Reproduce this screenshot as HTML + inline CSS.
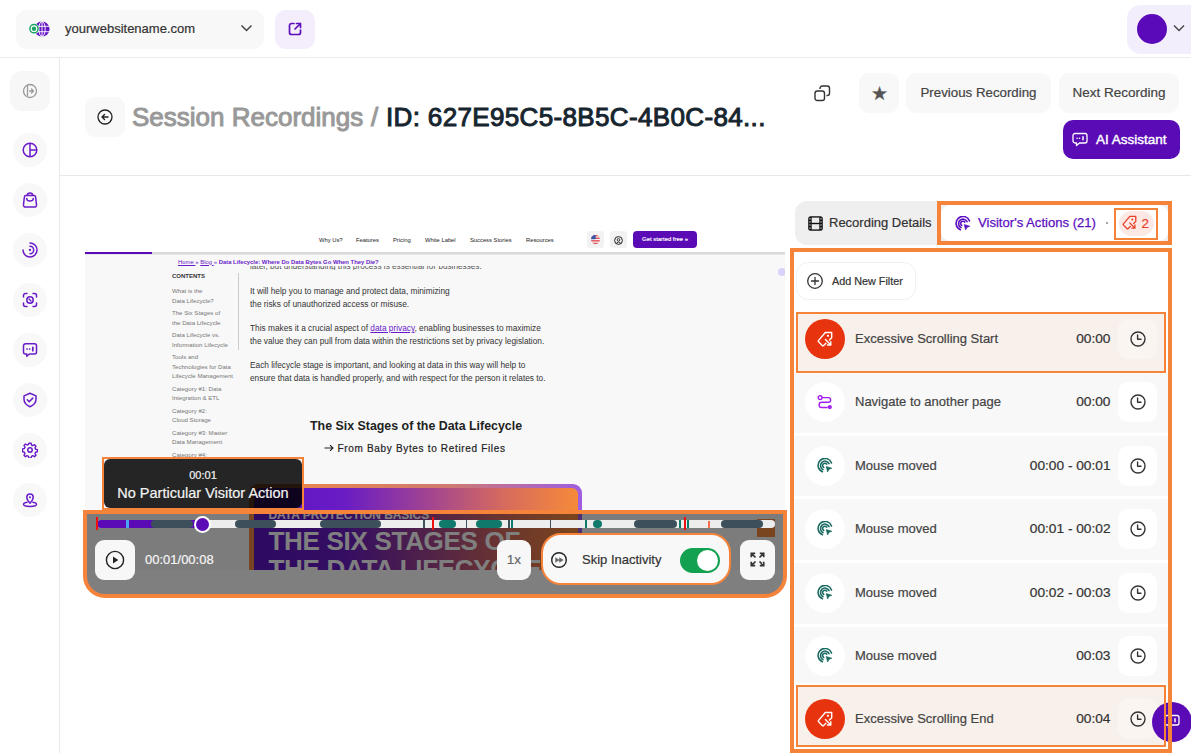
<!DOCTYPE html>
<html><head><meta charset="utf-8">
<style>
*{box-sizing:border-box;margin:0;padding:0}
html,body{width:1191px;height:753px;overflow:hidden;background:#fff;font-family:"Liberation Sans",sans-serif;color:#333}
.a{position:absolute}
svg{display:block}
#emb .t{-webkit-text-stroke:0}
.btn{position:absolute;background:#f8f8f8;border-radius:10px}
.t{position:absolute;white-space:nowrap;line-height:1;-webkit-text-stroke:.2px currentColor}
</style></head><body>
<!-- top header -->
<div class="a" style="left:16px;top:10px;width:248px;height:39px;background:#f8f8f8;border-radius:11px"></div>
<svg class="a" style="left:26px;top:19px" width="26" height="20" viewBox="0 0 26 20">
  <circle cx="16" cy="10" r="7.6" fill="#6414c4"/>
  <g stroke="#fff" stroke-width=".9" fill="none"><ellipse cx="16" cy="10" rx="3.2" ry="7.4"/><path d="M16 2.5v15M8.6 7.3h14.8M8.6 12.7h14.8"/></g>
  <circle cx="8" cy="9.7" r="5.3" fill="#fff"/>
  <circle cx="8" cy="9.7" r="4.1" fill="#fff" stroke="#19a463" stroke-width="1.5"/>
  <circle cx="8" cy="9.7" r="2.2" fill="#19a463"/>
</svg>
<div class="t" style="left:65px;top:22px;font-size:13px;color:#333">yourwebsitename.com</div>
<svg class="a" style="left:240px;top:24px" width="13" height="9" viewBox="0 0 13 9"><path d="M1.5 1.5l5 5 5-5" stroke="#444" stroke-width="1.5" fill="none"/></svg>
<div class="a" style="left:275px;top:10px;width:40px;height:39px;background:#f3edfc;border-radius:11px"></div>
<svg class="a" style="left:287px;top:21px" width="16" height="16" viewBox="0 0 16 16"><path d="M7 2.5H4.5a2 2 0 0 0-2 2v7a2 2 0 0 0 2 2h7a2 2 0 0 0 2-2V9M9.5 2.5h4v4M13.5 2.5L8 8" stroke="#5d0fb9" stroke-width="1.7" fill="none" stroke-linecap="round" stroke-linejoin="round"/></svg>
<div class="a" style="left:1127px;top:4.5px;width:80px;height:49px;background:#f3eefc;border-radius:14px"></div>
<div class="a" style="left:1137px;top:14px;width:30px;height:30px;background:#5a0ab8;border-radius:50%"></div>
<svg class="a" style="left:1173px;top:24px" width="12" height="8" viewBox="0 0 12 8"><path d="M1 1.5l5 5 5-5" stroke="#444" stroke-width="1.4" fill="none"/></svg>
<div class="a" style="left:0;top:57px;width:1191px;height:1px;background:#ebebeb"></div>

<!-- sidebar -->
<div class="a" style="left:59px;top:58px;width:1px;height:695px;background:#e9e9e9"></div>
<div class="a" style="left:10px;top:71px;width:40px;height:40px;background:#f7f7f7;border-radius:12px"></div>
<svg class="a" style="left:22px;top:83px" width="16" height="16" viewBox="0 0 16 16"><circle cx="8" cy="8" r="6.5" stroke="#9a9a9a" stroke-width="1.3" fill="none"/><path d="M5.5 3.5v9M7.5 8h4M9.5 6l2 2-2 2" stroke="#9a9a9a" stroke-width="1.3" fill="none" stroke-linecap="round" stroke-linejoin="round"/></svg>
<div class="a" style="left:13px;top:133px;width:34px;height:34px;background:#f8f8f8;border-radius:50%"></div>
<svg class="a" style="left:22px;top:142px" width="16" height="16" viewBox="0 0 16 16"><circle cx="8" cy="8" r="6.8" stroke="#6a1bc9" stroke-width="1.5" fill="none"/><path d="M8 1.2v13.6M8 8h6.8" stroke="#6a1bc9" stroke-width="1.5"/></svg>
<div class="a" style="left:13px;top:183px;width:34px;height:34px;background:#f8f8f8;border-radius:50%"></div>
<svg class="a" style="left:22px;top:192px" width="16" height="16" viewBox="0 0 16 16"><path d="M4 3.6H12Q13.4 3.6 13.6 5L14.5 12.6Q14.7 15 12.3 15H3.7Q1.3 15 1.5 12.6L2.4 5Q2.6 3.6 4 3.6ZM5.1 3.6Q5.4 1 8 1Q10.6 1 10.9 3.6" stroke="#6a1bc9" stroke-width="1.5" fill="none" stroke-linejoin="round"/><path d="M4.7 6.5Q4.9 9.1 8 9.1Q11.1 9.1 11.3 6.5" stroke="#6a1bc9" stroke-width="1.5" fill="none" stroke-linecap="round"/></svg>
<div class="a" style="left:13px;top:233px;width:34px;height:34px;background:#f8f8f8;border-radius:50%"></div>
<svg class="a" style="left:22px;top:242px" width="16" height="16" viewBox="0 0 16 16"><path d="M8 1A7 7 0 1 1 1 8M8 4.3A3.7 3.7 0 0 1 8 11.7" stroke="#6a1bc9" stroke-width="1.5" fill="none" stroke-linecap="round"/><circle cx="8" cy="8" r="1.15" fill="#6a1bc9"/></svg>
<div class="a" style="left:13px;top:283px;width:34px;height:34px;background:#f8f8f8;border-radius:50%"></div>
<svg class="a" style="left:22px;top:292px" width="16" height="16" viewBox="0 0 16 16"><path d="M1.5 5V3.5a2 2 0 0 1 2-2H5M11 1.5h1.5a2 2 0 0 1 2 2V5M14.5 11v1.5a2 2 0 0 1-2 2H11M5 14.5H3.5a2 2 0 0 1-2-2V11" stroke="#6a1bc9" stroke-width="1.5" fill="none" stroke-linecap="round"/><circle cx="8" cy="8" r="3.2" stroke="#6a1bc9" stroke-width="1.5" fill="none"/><path d="M7 7l2 2" stroke="#6a1bc9" stroke-width="1.3" stroke-linecap="round"/></svg>
<div class="a" style="left:13px;top:333px;width:34px;height:34px;background:#f8f8f8;border-radius:50%"></div>
<svg class="a" style="left:22px;top:342px" width="16" height="16" viewBox="0 0 16 16"><path d="M3.5 1.8h9a2 2 0 0 1 2 2v6.2a2 2 0 0 1-2 2H7.5l-2.7 2.3v-2.3H3.5a2 2 0 0 1-2-2V3.8a2 2 0 0 1 2-2z" stroke="#6a1bc9" stroke-width="1.5" fill="none" stroke-linejoin="round"/><path d="M5 7h.1M7.6 7h.1M10.8 5.3v3.4" stroke="#6a1bc9" stroke-width="1.7" stroke-linecap="round"/></svg>
<div class="a" style="left:13px;top:383px;width:34px;height:34px;background:#f8f8f8;border-radius:50%"></div>
<svg class="a" style="left:22px;top:392px" width="16" height="16" viewBox="0 0 16 16"><path d="M8 1.3l6 2.6v3.4c0 3.3-2.6 6-6 7.4-3.4-1.4-6-4.1-6-7.4V3.9z" stroke="#6a1bc9" stroke-width="1.5" fill="none" stroke-linejoin="round"/><path d="M5.3 7.8l1.9 1.9 3.6-3.6" stroke="#6a1bc9" stroke-width="1.5" fill="none" stroke-linecap="round" stroke-linejoin="round"/></svg>
<div class="a" style="left:13px;top:433px;width:34px;height:34px;background:#f8f8f8;border-radius:50%"></div>
<svg class="a" style="left:22px;top:442px" width="16" height="16" viewBox="0 0 16 16"><path d="M6.9 1.2h2.2l.4 1.9 1.3.6 1.7-1 1.5 1.5-1 1.7.6 1.3 1.9.4v2.2l-1.9.4-.6 1.3 1 1.7-1.5 1.5-1.7-1-1.3.6-.4 1.9H6.9l-.4-1.9-1.3-.6-1.7 1-1.5-1.5 1-1.7-.6-1.3-1.9-.4V6.9l1.9-.4.6-1.3-1-1.7 1.5-1.5 1.7 1 1.3-.6z" stroke="#6a1bc9" stroke-width="1.4" fill="none" stroke-linejoin="round"/><circle cx="8" cy="8" r="2.2" stroke="#6a1bc9" stroke-width="1.5" fill="none"/></svg>
<div class="a" style="left:13px;top:483px;width:34px;height:34px;background:#f8f8f8;border-radius:50%"></div>
<svg class="a" style="left:22px;top:492px" width="16" height="16" viewBox="0 0 16 16"><path d="M8 11.2C6 9 4.8 7.2 4.8 5.3a3.2 3.2 0 0 1 6.4 0c0 1.9-1.2 3.7-3.2 5.9z" stroke="#6a1bc9" stroke-width="1.5" fill="none" stroke-linejoin="round"/><circle cx="8" cy="5.3" r="1" fill="#6a1bc9"/><path d="M5.2 10.2C3 10.6 1.5 11.4 1.5 12.3c0 1.2 2.9 2.2 6.5 2.2s6.5-1 6.5-2.2c0-.9-1.5-1.7-3.7-2.1" stroke="#6a1bc9" stroke-width="1.5" fill="none" stroke-linecap="round"/></svg>

<!-- page header -->
<div class="a" style="left:60px;top:175px;width:1131px;height:1px;background:#e8e8e8"></div>
<div class="btn" style="left:85px;top:97px;width:40px;height:40px"></div>
<svg class="a" style="left:97px;top:109px" width="16" height="16" viewBox="0 0 16 16"><circle cx="8" cy="8" r="7" stroke="#222" stroke-width="1.3" fill="none"/><path d="M11 8H5.3M7.5 5.5L5 8l2.5 2.5" stroke="#222" stroke-width="1.4" fill="none" stroke-linecap="round" stroke-linejoin="round"/></svg>
<div class="t" style="left:132px;top:104px;font-size:26px;color:#999;-webkit-text-stroke:1px #999">Session Recordings <span style="position:absolute;left:239px">/</span></div>
<div class="t" style="left:386px;top:104px;font-size:26px;color:#17252f;-webkit-text-stroke:1px #17252f;letter-spacing:.35px">ID: 627E95C5-8B5C-4B0C-84...</div>
<svg class="a" style="left:814px;top:85px" width="17" height="17" viewBox="0 0 17 17"><rect x="1" y="6" width="9.5" height="9.5" rx="2.3" stroke="#333" stroke-width="1.4" fill="none"/><path d="M6 4V3.3A2.3 2.3 0 0 1 8.3 1h4.9a2.3 2.3 0 0 1 2.3 2.3v4.9a2.3 2.3 0 0 1-2.3 2.3h-.7" stroke="#333" stroke-width="1.4" fill="none"/></svg>
<div class="btn" style="left:859px;top:73px;width:40px;height:40px"></div>
<div class="t" style="left:859px;top:84px;width:40px;text-align:center;font-size:19px;color:#555">&#9733;</div>
<div class="btn" style="left:906px;top:73px;width:145px;height:40px"></div>
<div class="t" style="left:906px;top:86px;width:145px;text-align:center;font-size:13.3px;color:#444">Previous Recording</div>
<div class="btn" style="left:1059px;top:73px;width:120px;height:40px"></div>
<div class="t" style="left:1059px;top:86px;width:120px;text-align:center;font-size:13.5px;color:#444">Next Recording</div>
<div class="a" style="left:1063px;top:120px;width:117px;height:39px;background:#5b0bb5;border-radius:10px"></div>
<svg class="a" style="left:1072px;top:132px" width="16" height="15" viewBox="0 0 16 15"><path d="M3 1.5h10a2 2 0 0 1 2 2v5.5a2 2 0 0 1-2 2H7.5L4.5 13.5v-2.5H3a2 2 0 0 1-2-2V3.5a2 2 0 0 1 2-2z" stroke="#fff" stroke-width="1.3" fill="none" stroke-linejoin="round"/><path d="M5 6.3h.1M7.5 6.3h.1M11 4.8v3" stroke="#fff" stroke-width="1.5" stroke-linecap="round"/></svg>
<div class="t" style="left:1096px;top:133px;font-size:13.5px;color:#fff;-webkit-text-stroke:.4px #fff">AI Assistant</div>


<!-- embedded page -->
<div class="a" id="emb" style="left:85px;top:200px;width:700px;height:370px;overflow:hidden;background:#fff">
 <div class="a" style="left:0;top:54px;width:700px;height:341px;background:#f8f8f8"></div>
 <div class="a" style="left:0;top:52px;width:700px;height:2px;background:#d9d9d9;box-shadow:0 1px 1px rgba(0,0,0,.08)"></div>
 <div class="a" style="left:0;top:52px;width:67px;height:2px;background:#5b0bb5"></div>
 <div class="t" style="left:234px;top:37.5px;font-size:5.8px;color:#222">Why Us?</div>
 <div class="t" style="left:271px;top:37.5px;font-size:5.8px;color:#222">Features</div>
 <div class="t" style="left:308px;top:37.5px;font-size:5.8px;color:#222">Pricing</div>
 <div class="t" style="left:340px;top:37.5px;font-size:5.8px;color:#222">White Label</div>
 <div class="t" style="left:385px;top:37.5px;font-size:5.8px;color:#222">Success Stories</div>
 <div class="t" style="left:441px;top:37.5px;font-size:5.8px;color:#222">Resources</div>
 <div class="a" style="left:502px;top:31px;width:17px;height:17px;background:#f2f2f2;border-radius:3px"></div>
 <svg class="a" style="left:506px;top:35px" width="9" height="9" viewBox="0 0 9 9"><defs><clipPath id="fc"><circle cx="4.5" cy="4.5" r="4.5"/></clipPath></defs><g clip-path="url(#fc)"><rect width="9" height="9" fill="#f4f4f4"/><rect y="0" width="9" height="1.3" fill="#e0404a"/><rect y="2.6" width="9" height="1.3" fill="#e0404a"/><rect y="5.2" width="9" height="1.3" fill="#e0404a"/><rect y="7.8" width="9" height="1.3" fill="#e0404a"/><rect width="4.6" height="4.2" fill="#3553a8"/></g></svg>
 <div class="a" style="left:525px;top:31px;width:17px;height:17px;background:#f2f2f2;border-radius:3px"></div>
 <svg class="a" style="left:529px;top:35.5px" width="9" height="9" viewBox="0 0 9 9"><circle cx="4.5" cy="4.5" r="3.9" stroke="#222" stroke-width="1" fill="none"/><circle cx="4.5" cy="3.9" r="1.3" stroke="#222" stroke-width=".9" fill="none"/><path d="M2.3 7.2q2.2-2.2 4.4 0" stroke="#222" stroke-width=".9" fill="none"/></svg>
 <div class="a" style="left:548px;top:31px;width:64px;height:17px;background:#5b0bb5;border-radius:4px"></div>
 <div class="t" style="left:548px;top:36.5px;width:64px;text-align:center;font-size:5.9px;color:#fff;-webkit-text-stroke:.15px #fff">Get started free &raquo;</div>
 <div class="a" style="left:0;top:55px;width:700px;height:15px;background:#f8f8f8"></div>
 <div class="t" style="left:93px;top:59.5px;font-size:5.9px;color:#6a1bc9"><u>Home </u> &raquo; <u>Blog </u> &raquo; <b>Data Lifecycle: Where Do Data Bytes Go When They Die?</b></div>
 <div class="a" style="left:165px;top:66px;width:233px;height:4px;overflow:hidden"><div class="t" style="left:0;top:-3.5px;font-size:8.2px;color:#555">later, but understanding this process is essential for businesses.</div></div>
 <div class="t" style="left:87px;top:73px;font-size:6px;font-weight:bold;color:#333">CONTENTS</div>
 <div class="a" style="left:153px;top:73px;width:1px;height:77px;background:#ccc"></div>
 <div class="a" style="left:87px;top:86px;font-size:6.1px;line-height:9.5px;color:#777">
  <div style="margin-bottom:3px">What is the<br>Data Lifecycle?</div>
  <div style="margin-bottom:3px">The Six Stages of<br>the Data Lifecycle</div>
  <div style="margin-bottom:3px">Data Lifecycle vs.<br>Information Lifecycle</div>
  <div style="margin-bottom:3px">Tools and<br>Technologies for Data<br>Lifecycle Management</div>
  <div style="margin-bottom:3px">Category #1: Data<br>Integration &amp; ETL</div>
  <div style="margin-bottom:3px">Category #2:<br>Cloud Storage</div>
  <div style="margin-bottom:3px">Category #3: Master<br>Data Management</div>
  <div style="margin-bottom:3px">Category #4:</div>
 </div>
 <div class="a" style="left:165px;top:85px;font-size:8.3px;line-height:13px;color:#333;white-space:nowrap">
  <div style="margin-bottom:11px">It will help you to manage and protect data, minimizing<br>the risks of unauthorized access or misuse.</div>
  <div style="margin-bottom:11px">This makes it a crucial aspect of <u style="color:#6a1bc9">data privacy</u>, enabling businesses to maximize<br>the value they can pull from data within the restrictions set by privacy legislation.</div>
  <div>Each lifecycle stage is important, and looking at data in this way will help to<br>ensure that data is handled properly, and with respect for the person it relates to.</div>
 </div>
 <div class="t" style="left:225px;top:220px;font-size:12.4px;font-weight:bold;color:#222">The Six Stages of the Data Lifecycle</div>
 <svg class="a" style="left:239px;top:244px" width="10" height="8" viewBox="0 0 10 8"><path d="M.5 4H9M6 1.2L9 4 6 6.8" stroke="#222" stroke-width="1.1" fill="none"/></svg>
 <div class="t" style="left:252.5px;top:244px;font-size:10px;color:#222;letter-spacing:.67px;-webkit-text-stroke:.2px #222">From Baby Bytes to Retired Files</div>
 <div class="a" style="left:693px;top:68px;width:8px;height:8px;border-radius:50%;background:#d9d2fb"></div>
 <!-- image card -->
 <div class="a" style="left:164px;top:283.5px;width:333px;height:120px;border-radius:9px;background:linear-gradient(90deg,#ee8a45 0%,#d07a70 60%,#9d5ee2 100%)"></div>
 <div class="a" style="left:168.5px;top:288px;width:324px;height:120px;border-radius:6px 6px 0 0;background:linear-gradient(90deg,#5c14c6 0%,#6a1cc4 28%,#a4468f 55%,#d86c5c 78%,#f58a3a 100%)"></div>
 <div class="t" style="left:183.5px;top:309px;font-size:12px;font-weight:bold;color:#fff;letter-spacing:-.05px">DATA PROTECTION BASICS</div>
 <div class="t" style="left:183.5px;top:327px;font-size:26px;font-weight:bold;color:#fff;line-height:28px;letter-spacing:-.3px">THE SIX STAGES OF<br>THE DATA LIFECYCLE</div>
 <div class="a" style="left:672px;top:319px;width:18px;height:18px;background:#f28a3c"></div>
</div>


<!-- player controls -->
<div class="a" style="left:83px;top:510px;width:704px;height:88px;border:4px solid #f5843a;border-radius:0 0 22px 22px;background:rgba(0,0,0,.5)"></div>
<div id="bar" class="a" style="left:97px;top:520px;width:678px;height:8px;background:#ededed;border-radius:4px"></div>
<div class="a" style="left:97px;top:520px;width:100px;height:8px;background:#5b0bb5;border-radius:4px 0 0 4px"></div>
<div class="a" style="left:126px;top:520px;width:2.5px;height:8px;background:#4aa3f0"></div>
<div class="a" style="left:151px;top:520px;width:42px;height:8px;background:#3d4f5b;border-radius:4px"></div>
<div class="a" style="left:235px;top:520px;width:41px;height:8px;background:#3d4f5b;border-radius:4px"></div>
<div class="a" style="left:320px;top:520px;width:61px;height:8px;background:#3d4f5b;border-radius:4px"></div>
<div class="a" style="left:422.5px;top:520px;width:2px;height:8px;background:#3d4f5b"></div>
<div class="a" style="left:439px;top:520px;width:17px;height:8px;background:#0f7a6c;border-radius:4px"></div>
<div class="a" style="left:465.5px;top:520px;width:1.5px;height:8px;background:#3d4f5b"></div>
<div class="a" style="left:476px;top:520px;width:26px;height:8px;background:#0f7a6c;border-radius:4px"></div>
<div class="a" style="left:508px;top:520px;width:1.5px;height:8px;background:#3d4f5b"></div>
<div class="a" style="left:511px;top:520px;width:2px;height:8px;background:#0f7a6c"></div>
<div class="a" style="left:549.5px;top:520px;width:1.5px;height:8px;background:#3d4f5b"></div>
<div class="a" style="left:585px;top:520px;width:1.5px;height:8px;background:#0f7a6c"></div>
<div class="a" style="left:592.5px;top:520px;width:9px;height:8px;background:#0f7a6c;border-radius:4px"></div>
<div class="a" style="left:634px;top:520px;width:43px;height:8px;background:#3d4f5b;border-radius:4px"></div>
<div class="a" style="left:678.5px;top:520px;width:2px;height:8px;background:#0f7a6c"></div>
<div class="a" style="left:687px;top:520px;width:2px;height:8px;background:#0f7a6c"></div>
<div class="a" style="left:707.5px;top:520.5px;width:2px;height:7px;background:#ff6b4a"></div>
<div class="a" style="left:721px;top:520px;width:42px;height:8px;background:#3d4f5b;border-radius:4px"></div>
<div class="a" style="left:95.5px;top:517px;width:2px;height:13px;background:#f01010"></div>
<div class="a" style="left:431.5px;top:517px;width:2.2px;height:13px;background:#f01010"></div>
<div class="a" style="left:684px;top:517px;width:2.2px;height:13px;background:#f01010"></div>
<div class="a" style="left:193.5px;top:515.5px;width:17px;height:17px;background:#5b0bb5;border:2px solid #fff;border-radius:50%"></div>
<div class="a" style="left:95px;top:540px;width:40px;height:40px;background:#f7f7f7;border-radius:9px"></div>
<svg class="a" style="left:105px;top:550px" width="20" height="20" viewBox="0 0 20 20"><circle cx="10" cy="10" r="8.6" stroke="#222" stroke-width="1.4" fill="none"/><path d="M8 6.5v7l5.3-3.5z" fill="#222"/></svg>
<div class="t" style="left:145px;top:553px;font-size:13px;color:#f5f5f5">00:01/00:08</div>
<div class="a" style="left:497px;top:540px;width:34px;height:40px;background:#f7f7f7;border-radius:9px"></div>
<div class="t" style="left:497px;top:553px;width:34px;text-align:center;font-size:13.5px;color:#666">1x</div>
<div class="a" style="left:541px;top:533px;width:190px;height:52px;background:#f8f8f8;border:2.5px solid #f5843a;border-radius:20px"></div>
<svg class="a" style="left:550px;top:551px" width="18" height="18" viewBox="0 0 18 18"><circle cx="9" cy="9" r="7.3" stroke="#222" stroke-width="1.4" fill="none"/><path d="M5.3 6.3v5.4L9.6 9zM9.2 6.3v5.4L13.7 9z" fill="#666"/></svg>
<div class="t" style="left:582px;top:553px;font-size:13px;color:#333">Skip Inactivity</div>
<div class="a" style="left:680px;top:547.5px;width:40px;height:25px;background:#12a150;border-radius:13px"></div>
<div class="a" style="left:696.5px;top:549.5px;width:21px;height:21px;background:#fff;border-radius:50%"></div>
<div class="a" style="left:740px;top:540px;width:35px;height:40px;background:#f7f7f7;border-radius:9px"></div>
<svg class="a" style="left:750px;top:552px" width="15" height="15" viewBox="0 0 15 15"><g stroke="#333" stroke-width="1.7" fill="none" stroke-linejoin="miter"><path d="M1.3 5.2V1.3H5.2M1.3 1.3l4.2 4.2M9.8 1.3h3.9v3.9M13.7 1.3L9.5 5.5M13.7 9.8v3.9H9.8M13.7 13.7L9.5 9.5M5.2 13.7H1.3V9.8M1.3 13.7l4.2-4.2"/></g></svg>
<!-- tooltip -->
<div class="a" style="left:102px;top:457px;width:202px;height:53px;border:2px solid #f5843a"></div>
<div class="a" style="left:104px;top:459px;width:198px;height:49px;background:rgba(0,0,0,.85);border-radius:6px"></div>
<div class="t" style="left:104px;top:470px;width:198px;text-align:center;font-size:11px;color:#f3f3f3">00:01</div>
<div class="t" style="left:104px;top:486px;width:198px;text-align:center;font-size:14.5px;color:#f3f3f3">No Particular Visitor Action</div>


<!-- right panel -->
<div class="a" style="left:795px;top:201px;width:376px;height:44px;background:#efefef;border-radius:12px"></div>
<svg class="a" style="left:807px;top:215px" width="17" height="17" viewBox="0 0 17 17"><rect x="1.2" y="1.2" width="14.6" height="14.6" rx="2.5" fill="#111"/><rect x="4.7" y="2.6" width="7.6" height="5.2" fill="#ececec"/><rect x="4.7" y="9.2" width="7.6" height="5.2" fill="#ececec"/><g fill="#ececec"><rect x="2.4" y="3.2" width="1.2" height="1.2"/><rect x="2.4" y="6.3" width="1.2" height="1.2"/><rect x="2.4" y="9.4" width="1.2" height="1.2"/><rect x="2.4" y="12.5" width="1.2" height="1.2"/><rect x="13.4" y="3.2" width="1.2" height="1.2"/><rect x="13.4" y="6.3" width="1.2" height="1.2"/><rect x="13.4" y="9.4" width="1.2" height="1.2"/><rect x="13.4" y="12.5" width="1.2" height="1.2"/></g></svg>
<div class="t" style="left:829px;top:216px;font-size:13px;color:#333">Recording Details</div>
<div class="a" style="left:941px;top:205px;width:227px;height:36px;background:#fff;border-radius:9px"></div>
<div class="a" style="left:937px;top:201px;width:235px;height:44px;border:4px solid #f5843a"></div>
<svg class="a" style="left:955px;top:215.5px" width="16" height="16" viewBox="0 0 16 16"><path d="M5.4 13.7A6.9 6.9 0 1 1 14.5 5M6 11.6A4.5 4.5 0 1 1 12.1 5.6M6.7 9.5A2.3 2.3 0 1 1 9.7 6.1" stroke="#5b10c0" stroke-width="1.6" fill="none" stroke-linecap="round"/><path d="M9.2 8.5L14.9 10.2L12.1 11.3L10.6 14Z" fill="#5b10c0" stroke="#5b10c0" stroke-width=".6" stroke-linejoin="round"/></svg>
<div class="t" style="left:978px;top:216px;font-size:13.1px;color:#5b10c0;-webkit-text-stroke:.25px #5b10c0">Visitor's Actions (21)</div>
<div class="a" style="left:1106px;top:222px;width:2px;height:2px;background:#888;border-radius:50%"></div>
<div class="a" style="left:1119px;top:211px;width:35px;height:25px;background:#fce8e4;border-radius:12.5px"></div>
<svg class="a" style="left:1122px;top:215px" width="15" height="15" viewBox="0 0 16 16"><path d="M8.9 12.2L6.6 14.4a1 1 0 0 1-1.4 0L1.6 10.8a1 1 0 0 1 0-1.4L8.3 1.5H14.7V6.8L12.5 9.1" stroke="#e8402a" stroke-width="1.35" fill="none" stroke-linejoin="round" stroke-linecap="round"/><path d="M8.4 8.6L13.8 14M13.8 10.6V14H10.4" stroke="#e8402a" stroke-width="1.35" fill="none" stroke-linecap="round" stroke-linejoin="round"/><circle cx="11" cy="4.8" r="1.1" fill="#e8402a"/></svg>
<div class="t" style="left:1141.5px;top:217px;font-size:13.4px;color:#e8402a">2</div>
<div class="a" style="left:1114px;top:207.5px;width:44px;height:32px;border:2px solid #f5843a"></div>
<div class="a" style="left:790px;top:248px;width:382px;height:505px;border:4px solid #f5843a;border-bottom-width:4px;height:505px"></div>
<div class="a" style="left:796px;top:262px;width:120px;height:38px;background:#fff;border:1.5px solid #f1f1f1;border-radius:12px"></div>
<svg class="a" style="left:806px;top:272px" width="18" height="18" viewBox="0 0 18 18"><circle cx="9" cy="9" r="7.3" stroke="#333" stroke-width="1.3" fill="none"/><path d="M9 5.5v7M5.5 9h7" stroke="#333" stroke-width="1.3" stroke-linecap="round"/></svg>
<div class="t" style="left:832px;top:276px;font-size:10.8px;color:#333">Add New Filter</div>
<div class="a" style="left:796px;top:312px;width:370px;height:61px;background:#f8f0eb;border:2px solid #f5843a"></div>
<div class="a" style="left:805px;top:319px;width:40px;height:40px;background:#e8330f;border-radius:50%"></div>
<svg class="a" style="left:817px;top:331px" width="16" height="16" viewBox="0 0 16 16"><path d="M8.9 12.2L6.6 14.4a1 1 0 0 1-1.4 0L1.6 10.8a1 1 0 0 1 0-1.4L8.3 1.5H14.7V6.8L12.5 9.1" stroke="#fff" stroke-width="1.4" fill="none" stroke-linejoin="round" stroke-linecap="round"/><path d="M8.4 8.6L13.8 14M13.8 10.6V14H10.4" stroke="#fff" stroke-width="1.4" fill="none" stroke-linecap="round" stroke-linejoin="round"/><circle cx="11" cy="4.8" r="1.1" fill="#fff"/></svg>
<div class="t" style="left:855px;top:332.0px;font-size:13px;color:#444">Excessive Scrolling Start</div>
<div class="t" style="left:900px;top:332.4px;width:210.5px;text-align:right;font-size:13.7px;color:#333">00:00</div>
<div class="a" style="left:1118px;top:319px;width:39px;height:40px;background:#fbf5f1;border-radius:10px"></div>
<svg class="a" style="left:1129.5px;top:331px" width="16" height="16" viewBox="0 0 16 16"><circle cx="8" cy="8" r="7" stroke="#333" stroke-width="1.4" fill="none"/><path d="M7.6 4v4.3h3.4" stroke="#333" stroke-width="1.4" fill="none" stroke-linecap="round" stroke-linejoin="round"/></svg>
<div class="a" style="left:794px;top:373.5px;width:374px;height:59.0px;background:#f8f8f8"></div>
<div class="a" style="left:805px;top:382px;width:40px;height:40px;background:#fff;border-radius:50%"></div>
<svg class="a" style="left:817px;top:394px" width="16" height="16" viewBox="0 0 16 16"><circle cx="3.1" cy="3.6" r="1.9" stroke="#a41ff0" stroke-width="1.4" fill="none"/><path d="M5 3.6H11.3A2.35 2.35 0 0 1 11.3 8.3H4.7A2.6 2.6 0 0 0 4.7 13.5H10.8" stroke="#a41ff0" stroke-width="1.4" fill="none"/><circle cx="12.8" cy="13.1" r="2.1" fill="#a41ff0"/></svg>
<div class="t" style="left:855px;top:395.0px;font-size:13px;color:#444">Navigate to another page</div>
<div class="t" style="left:900px;top:395.4px;width:210.5px;text-align:right;font-size:13.7px;color:#333">00:00</div>
<div class="a" style="left:1118px;top:382px;width:39px;height:40px;background:#fff;border-radius:10px"></div>
<svg class="a" style="left:1129.5px;top:394px" width="16" height="16" viewBox="0 0 16 16"><circle cx="8" cy="8" r="7" stroke="#333" stroke-width="1.4" fill="none"/><path d="M7.6 4v4.3h3.4" stroke="#333" stroke-width="1.4" fill="none" stroke-linecap="round" stroke-linejoin="round"/></svg>
<div class="a" style="left:794px;top:435.5px;width:374px;height:60.5px;background:#f8f8f8"></div>
<div class="a" style="left:805px;top:446px;width:40px;height:40px;background:#fff;border-radius:50%"></div>
<svg class="a" style="left:817px;top:458px" width="16" height="16" viewBox="0 0 16 16"><path d="M5.4 13.7A6.9 6.9 0 1 1 14.5 5M6 11.6A4.5 4.5 0 1 1 12.1 5.6M6.7 9.5A2.3 2.3 0 1 1 9.7 6.1" stroke="#17695f" stroke-width="1.55" fill="none" stroke-linecap="round"/><path d="M9.2 8.5L14.9 10.2L12.1 11.3L10.6 14Z" fill="#17695f" stroke="#17695f" stroke-width=".6" stroke-linejoin="round"/></svg>
<div class="t" style="left:855px;top:459.0px;font-size:13px;color:#444">Mouse moved</div>
<div class="t" style="left:900px;top:459.4px;width:210.5px;text-align:right;font-size:13.7px;color:#333">00:00 - 00:01</div>
<div class="a" style="left:1118px;top:446px;width:39px;height:40px;background:#fff;border-radius:10px"></div>
<svg class="a" style="left:1129.5px;top:458px" width="16" height="16" viewBox="0 0 16 16"><circle cx="8" cy="8" r="7" stroke="#333" stroke-width="1.4" fill="none"/><path d="M7.6 4v4.3h3.4" stroke="#333" stroke-width="1.4" fill="none" stroke-linecap="round" stroke-linejoin="round"/></svg>
<div class="a" style="left:794px;top:499px;width:374px;height:61px;background:#f8f8f8"></div>
<div class="a" style="left:805px;top:509px;width:40px;height:40px;background:#fff;border-radius:50%"></div>
<svg class="a" style="left:817px;top:521px" width="16" height="16" viewBox="0 0 16 16"><path d="M5.4 13.7A6.9 6.9 0 1 1 14.5 5M6 11.6A4.5 4.5 0 1 1 12.1 5.6M6.7 9.5A2.3 2.3 0 1 1 9.7 6.1" stroke="#17695f" stroke-width="1.55" fill="none" stroke-linecap="round"/><path d="M9.2 8.5L14.9 10.2L12.1 11.3L10.6 14Z" fill="#17695f" stroke="#17695f" stroke-width=".6" stroke-linejoin="round"/></svg>
<div class="t" style="left:855px;top:522.0px;font-size:13px;color:#444">Mouse moved</div>
<div class="t" style="left:900px;top:522.4px;width:210.5px;text-align:right;font-size:13.7px;color:#333">00:01 - 00:02</div>
<div class="a" style="left:1118px;top:509px;width:39px;height:40px;background:#fff;border-radius:10px"></div>
<svg class="a" style="left:1129.5px;top:521px" width="16" height="16" viewBox="0 0 16 16"><circle cx="8" cy="8" r="7" stroke="#333" stroke-width="1.4" fill="none"/><path d="M7.6 4v4.3h3.4" stroke="#333" stroke-width="1.4" fill="none" stroke-linecap="round" stroke-linejoin="round"/></svg>
<div class="a" style="left:794px;top:563px;width:374px;height:60.5px;background:#f8f8f8"></div>
<div class="a" style="left:805px;top:572.5px;width:40px;height:40px;background:#fff;border-radius:50%"></div>
<svg class="a" style="left:817px;top:584.5px" width="16" height="16" viewBox="0 0 16 16"><path d="M5.4 13.7A6.9 6.9 0 1 1 14.5 5M6 11.6A4.5 4.5 0 1 1 12.1 5.6M6.7 9.5A2.3 2.3 0 1 1 9.7 6.1" stroke="#17695f" stroke-width="1.55" fill="none" stroke-linecap="round"/><path d="M9.2 8.5L14.9 10.2L12.1 11.3L10.6 14Z" fill="#17695f" stroke="#17695f" stroke-width=".6" stroke-linejoin="round"/></svg>
<div class="t" style="left:855px;top:585.5px;font-size:13px;color:#444">Mouse moved</div>
<div class="t" style="left:900px;top:585.9px;width:210.5px;text-align:right;font-size:13.7px;color:#333">00:02 - 00:03</div>
<div class="a" style="left:1118px;top:572.5px;width:39px;height:40px;background:#fff;border-radius:10px"></div>
<svg class="a" style="left:1129.5px;top:584.5px" width="16" height="16" viewBox="0 0 16 16"><circle cx="8" cy="8" r="7" stroke="#333" stroke-width="1.4" fill="none"/><path d="M7.6 4v4.3h3.4" stroke="#333" stroke-width="1.4" fill="none" stroke-linecap="round" stroke-linejoin="round"/></svg>
<div class="a" style="left:794px;top:626.5px;width:374px;height:56.5px;background:#f8f8f8"></div>
<div class="a" style="left:805px;top:635.8px;width:40px;height:40px;background:#fff;border-radius:50%"></div>
<svg class="a" style="left:817px;top:647.8px" width="16" height="16" viewBox="0 0 16 16"><path d="M5.4 13.7A6.9 6.9 0 1 1 14.5 5M6 11.6A4.5 4.5 0 1 1 12.1 5.6M6.7 9.5A2.3 2.3 0 1 1 9.7 6.1" stroke="#17695f" stroke-width="1.55" fill="none" stroke-linecap="round"/><path d="M9.2 8.5L14.9 10.2L12.1 11.3L10.6 14Z" fill="#17695f" stroke="#17695f" stroke-width=".6" stroke-linejoin="round"/></svg>
<div class="t" style="left:855px;top:648.8px;font-size:13px;color:#444">Mouse moved</div>
<div class="t" style="left:900px;top:649.1999999999999px;width:210.5px;text-align:right;font-size:13.7px;color:#333">00:03</div>
<div class="a" style="left:1118px;top:635.8px;width:39px;height:40px;background:#fff;border-radius:10px"></div>
<svg class="a" style="left:1129.5px;top:647.8px" width="16" height="16" viewBox="0 0 16 16"><circle cx="8" cy="8" r="7" stroke="#333" stroke-width="1.4" fill="none"/><path d="M7.6 4v4.3h3.4" stroke="#333" stroke-width="1.4" fill="none" stroke-linecap="round" stroke-linejoin="round"/></svg>
<div class="a" style="left:796px;top:685px;width:370px;height:62px;background:#f8f0eb;border:2px solid #f5843a"></div>
<div class="a" style="left:805px;top:699px;width:40px;height:40px;background:#e8330f;border-radius:50%"></div>
<svg class="a" style="left:817px;top:711px" width="16" height="16" viewBox="0 0 16 16"><path d="M8.9 12.2L6.6 14.4a1 1 0 0 1-1.4 0L1.6 10.8a1 1 0 0 1 0-1.4L8.3 1.5H14.7V6.8L12.5 9.1" stroke="#fff" stroke-width="1.4" fill="none" stroke-linejoin="round" stroke-linecap="round"/><path d="M8.4 8.6L13.8 14M13.8 10.6V14H10.4" stroke="#fff" stroke-width="1.4" fill="none" stroke-linecap="round" stroke-linejoin="round"/><circle cx="11" cy="4.8" r="1.1" fill="#fff"/></svg>
<div class="t" style="left:855px;top:712.0px;font-size:13px;color:#444">Excessive Scrolling End</div>
<div class="t" style="left:900px;top:712.4px;width:210.5px;text-align:right;font-size:13.7px;color:#333">00:04</div>
<div class="a" style="left:1118px;top:699px;width:39px;height:40px;background:#fbf5f1;border-radius:10px"></div>
<svg class="a" style="left:1129.5px;top:711px" width="16" height="16" viewBox="0 0 16 16"><circle cx="8" cy="8" r="7" stroke="#333" stroke-width="1.4" fill="none"/><path d="M7.6 4v4.3h3.4" stroke="#333" stroke-width="1.4" fill="none" stroke-linecap="round" stroke-linejoin="round"/></svg>
<div class="a" style="left:1152px;top:702px;width:40px;height:40px;background:#5b0bb5;border-radius:50%"></div>
<svg class="a" style="left:1164px;top:714px" width="17" height="15" viewBox="0 0 17 15"><path d="M3 1.5h10a2 2 0 0 1 2 2v5.5a2 2 0 0 1-2 2H7.5L4.5 13.5v-2.5H3a2 2 0 0 1-2-2V3.5a2 2 0 0 1 2-2z" stroke="#fff" stroke-width="1.3" fill="none" stroke-linejoin="round"/><path d="M5 6.3h.1M7.5 6.3h.1M11 4.8v3" stroke="#fff" stroke-width="1.5" stroke-linecap="round"/></svg>
<div class="a" style="left:1164px;top:685px;width:2px;height:62px;background:#f5843a"></div>
<div class="a" style="left:1168px;top:680px;width:4px;height:73px;background:#f5843a"></div>
<div class="a" style="left:790px;top:749px;width:382px;height:4px;background:#f5843a"></div>

</body></html>
